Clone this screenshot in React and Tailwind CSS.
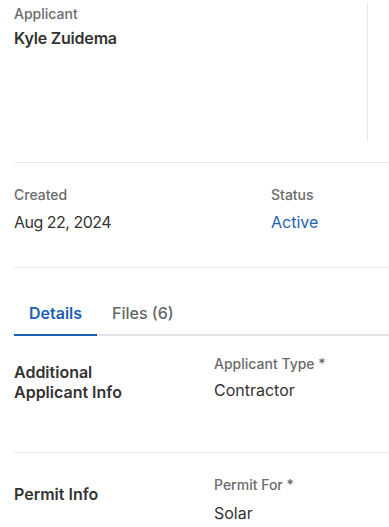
export default function App() {
  return (
    <div className="w-[389px] h-[527px] overflow-hidden bg-white pl-[14px] text-[#333333]" style={{ fontFamily: "Inter, 'Noto Sans', sans-serif" }}>
      <div className="flex pt-[2px]">
        <div className="w-[354px] h-[140px] border-r border-[#e8e8e8] pt-[2px]">
          <div className="text-[14px] leading-5 font-medium text-[#6b6b6b]">Applicant</div>
          <div className="mt-[2px] text-[16px] leading-6 font-semibold tracking-[-0.2px] text-[#333333]">Kyle Zuidema</div>
        </div>
      </div>
      <div className="mt-[20px] border-t border-[#e8e8e8] pt-[22px] pb-[33px] flex">
        <div className="w-[257px]">
          <div className="text-[14px] leading-5 font-medium text-[#6b6b6b]">Created</div>
          <div className="mt-[5px] text-[16px] leading-6 tracking-[-0.5px] text-[#333333]">Aug 22, 2024</div>
        </div>
        <div>
          <div className="text-[14px] leading-5 font-medium text-[#6b6b6b]">Status</div>
          <div className="mt-[5px] text-[16px] leading-6 text-[#1d5fb2]">Active</div>
        </div>
      </div>
      <div className="border-t border-[#e8e8e8] pt-[23px]">
        <div className="flex border-b-2 border-[#e3e3e8]">
          <div className="-mb-[2px] border-b-2 border-[#1d5fb2] px-[15px] pt-[10px] pb-[9px] text-[16px] leading-6 font-semibold text-[#1d5fb2]">Details</div>
          <div className="px-[15px] pt-[10px] pb-[9px] text-[16px] leading-6 font-medium text-[#666666]">Files (6)</div>
        </div>
      </div>
      <div className="flex pt-[18px] pb-[50px] border-b border-[#ececec]">
        <div className="w-[200px] pt-[8px] text-[16px] leading-5 font-semibold text-[#333333]">
          Additional<br />Applicant Info
        </div>
        <div>
          <div className="text-[14px] leading-5 font-medium text-[#6b6b6b]">Applicant Type *</div>
          <div className="mt-[4px] text-[16px] leading-6 text-[#333333]">Contractor</div>
        </div>
      </div>
      <div className="flex pt-[22px]">
        <div className="w-[200px] pt-[9px] text-[16px] leading-5 font-semibold text-[#333333]">Permit Info</div>
        <div>
          <div className="text-[14px] leading-5 font-medium text-[#6b6b6b]">Permit For *</div>
          <div className="mt-[6px] text-[16px] leading-6 text-[#333333]">Solar</div>
        </div>
      </div>
    </div>
  );
}
